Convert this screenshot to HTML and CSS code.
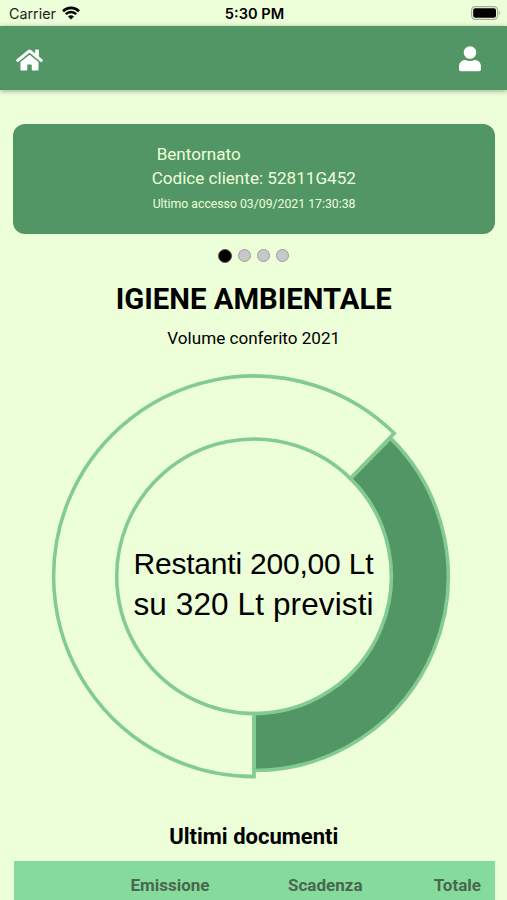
FILE: index.html
```
<!DOCTYPE html>
<html lang="it">

<head>
    <meta charset="UTF-8">
    <meta name="viewport" content="width=device-width, initial-scale=1.0">
    <title>Igiene Ambientale</title>
    <link rel="stylesheet" href="styles.css">
</head>

<body>

    <div class="status-bar">
        <div class="carrier">
            <span>Carrier</span>
            <svg class="wifi" viewBox="0 0 18 14">
                <path d="M1 5.2a11.4 11.4 0 0 1 16 0M3.8 8.1a7.4 7.4 0 0 1 10.4 0" />
                <path class="wifi-dot" d="M9 13.6 6 10.6a4.3 4.3 0 0 1 6 0z" />
            </svg>
        </div>
        <div class="clock">5:30 PM</div>
        <svg class="battery" viewBox="0 0 30 14">
            <rect class="battery-case" x=".6" y=".6" width="26" height="12.8" rx="3.6" />
            <rect x="2.2" y="2.2" width="22.8" height="9.6" rx="2" />
            <path class="battery-tip" d="M27.8 4.6q2.2 2.4 0 4.8z" />
        </svg>
    </div>

    <header class="navbar">
        <svg class="home-icon" viewBox="0 0 576 512">
            <path d="M280.4 148.3 96 300.1V464a16 16 0 0 0 16 16l112.1-.3a16 16 0 0 0 15.9-16V368a16 16 0 0 1 16-16h64a16 16 0 0 1 16 16v95.6a16 16 0 0 0 16 16.1L464 480a16 16 0 0 0 16-16V300L295.7 148.3a12.2 12.2 0 0 0-15.3 0zM571.6 251.5 488 182.6V44a12 12 0 0 0-12-12h-56a12 12 0 0 0-12 12v72.6L318.5 43a48 48 0 0 0-61 0L4.3 251.5a12 12 0 0 0-1.6 16.9l25.5 31a12 12 0 0 0 16.9 1.6l235.2-193.7a12.2 12.2 0 0 1 15.3 0L530.9 301a12 12 0 0 0 16.9-1.6l25.5-31a12 12 0 0 0-1.7-16.9z" />
        </svg>
        <svg class="user-icon" viewBox="0 0 22 26">
            <circle cx="11" cy="6.5" r="6.3" />
            <path d="M6.3 14q4.7 1.8 9.4 0C19.7 14 22 17.3 22 20.8v2.4q0 2-2 2H2q-2 0-2-2v-2.4C0 17.3 2.3 14 6.3 14z" />
        </svg>
    </header>

    <main>
        <div class="card">
            <div class="card-text">
                <div class="welcome">Bentornato</div>
                <div class="client">Codice cliente: 52811G452</div>
                <div class="last-access">Ultimo accesso 03/09/2021 17:30:38</div>
            </div>
        </div>

        <div class="dots">
            <span class="dot active"></span>
            <span class="dot"></span>
            <span class="dot"></span>
            <span class="dot"></span>
        </div>

        <h1>IGIENE AMBIENTALE</h1>
        <p class="subtitle">Volume conferito 2021</p>

        <!-- Volume chart -->
        <svg class="chart" viewBox="0 0 408 408">
            <g transform="translate(204 204.3)">
                <path class="used" d="M0 194.2A194.2 194.2 0 0 0 136.5-138.2L96.5-97.7A137.3 137.3 0 0 1 0 137.3z" />
                <path class="remaining" d="M0 200.3A200.3 200.3 0 1 1 140.2-143L96.5-97.7A137.3 137.3 0 1 0 0 137.3z" />
            </g>
            <text class="line-one" x="83.5" y="202" textLength="240">Restanti 200,00 Lt</text>
            <text class="line-two" x="83.5" y="242.5" textLength="240">su 320 Lt previsti</text>
        </svg>

        <h2>Ultimi documenti</h2>
        <table class="documents">
            <tr>
                <th class="issued">Emissione</th>
                <th class="due">Scadenza</th>
                <th class="total">Totale</th>
            </tr>
        </table>
    </main>

</body>

</html>
```
FILE: styles.css
```
/* General Page Styles */
* {
    box-sizing: border-box;
}

body {
    font-family: Roboto, sans-serif;
    margin: 0;
    background: #edffd9;
    color: #000;
    height: 900px;
    overflow: hidden;
}

/* Status Bar */
.status-bar {
    height: 26px;
    padding: 2px 7px 0 9px;
    display: grid;
    grid-template-columns: 1fr auto 1fr;
    align-items: center;
    font-family: Inter, sans-serif;
    font-size: 14.3px;
}

.carrier {
    display: flex;
    align-items: center;
    gap: 6px;
    margin-top: -1px;
    color: #222;
}

.wifi {
    width: 18px;
    height: 14px;
    margin-top: -2px;
    fill: none;
    stroke: #000;
    stroke-width: 2.6;
}

.wifi-dot {
    fill: #000;
    stroke: none;
}

.clock {
    margin-top: -1px;
    font-weight: 600;
    font-size: 14.6px;
}

.battery {
    width: 30px;
    height: 14px;
    margin: -2px -1px 0 0;
    justify-self: end;
}

.battery-case {
    fill: none;
    stroke: #a3ae98;
    stroke-width: 1.2;
}

.battery-tip {
    fill: #a3ae98;
}

/* Navbar */
.navbar {
    height: 64px;
    padding: 3px 26px 0 16px;
    display: flex;
    align-items: center;
    justify-content: space-between;
    background: #529665;
    box-shadow: 0 1px 5px rgba(0, 0, 0, 0.35);
}

.navbar svg {
    fill: #fff;
}

.home-icon {
    width: 27px;
    height: 24px;
}

.user-icon {
    width: 22px;
    height: 26px;
    margin-top: -2px;
}

main {
    padding: 34.4px 12.5px 0 13px;
}

/* Welcome Card */
.card {
    height: 110px;
    padding-top: 17.6px;
    border-radius: 12px;
    background: #529665;
    color: #edffd9;
    display: flex;
    justify-content: center;
}

.card-text {
    font-size: 17.1px;
    line-height: 24px;
}

.welcome {
    padding-left: 5px;
}

.last-access {
    font-size: 12.25px;
    line-height: 29px;
    padding-left: 1px;
}

/* Slider Dots */
.dots {
    height: 14px;
    margin-top: 14.6px;
    display: flex;
    justify-content: center;
    align-items: center;
    gap: 6px;
}

.dot {
    width: 13px;
    height: 13px;
    border-radius: 50%;
    background: #c8c8ca;
    border: 1px solid #999f95;
}

.dot.active {
    width: 14px;
    height: 14px;
    background: #000;
    border-color: #555;
}

h1 {
    margin: 19px 0 0;
    font-size: 29.3px;
    line-height: 34px;
    text-align: center;
}

.subtitle {
    margin: 11px 0 0;
    font-size: 17.1px;
    line-height: 22px;
    text-align: center;
}

/* Chart */
.chart {
    display: block;
    width: 408px;
    height: 408px;
    margin: 23px 0 0 37px;
    font-family: "Liberation Sans", Arial, sans-serif;
}

.chart path {
    stroke: #84cb93;
    stroke-width: 3.6;
}

.used {
    fill: #529665;
}

.remaining {
    fill: none;
}

.line-one {
    font-size: 30px;
}

.line-two {
    font-size: 31.5px;
}

/* Documents */
h2 {
    margin: 44px 0 0;
    font-size: 22px;
    line-height: 26px;
    text-align: center;
}

.documents {
    width: 480.5px;
    height: 60px;
    margin: 11.5px 0 0 1px;
    border-collapse: collapse;
    table-layout: fixed;
    background: #85db9b;
    color: #4a6650;
    font-size: 17px;
}

.documents th {
    padding: 14px 0 0;
    line-height: 20px;
    vertical-align: top;
    text-align: right;
}

.issued {
    width: 195.5px;
}

.due {
    width: 153px;
}

.documents .total {
    padding-right: 13.5px;
}
```
